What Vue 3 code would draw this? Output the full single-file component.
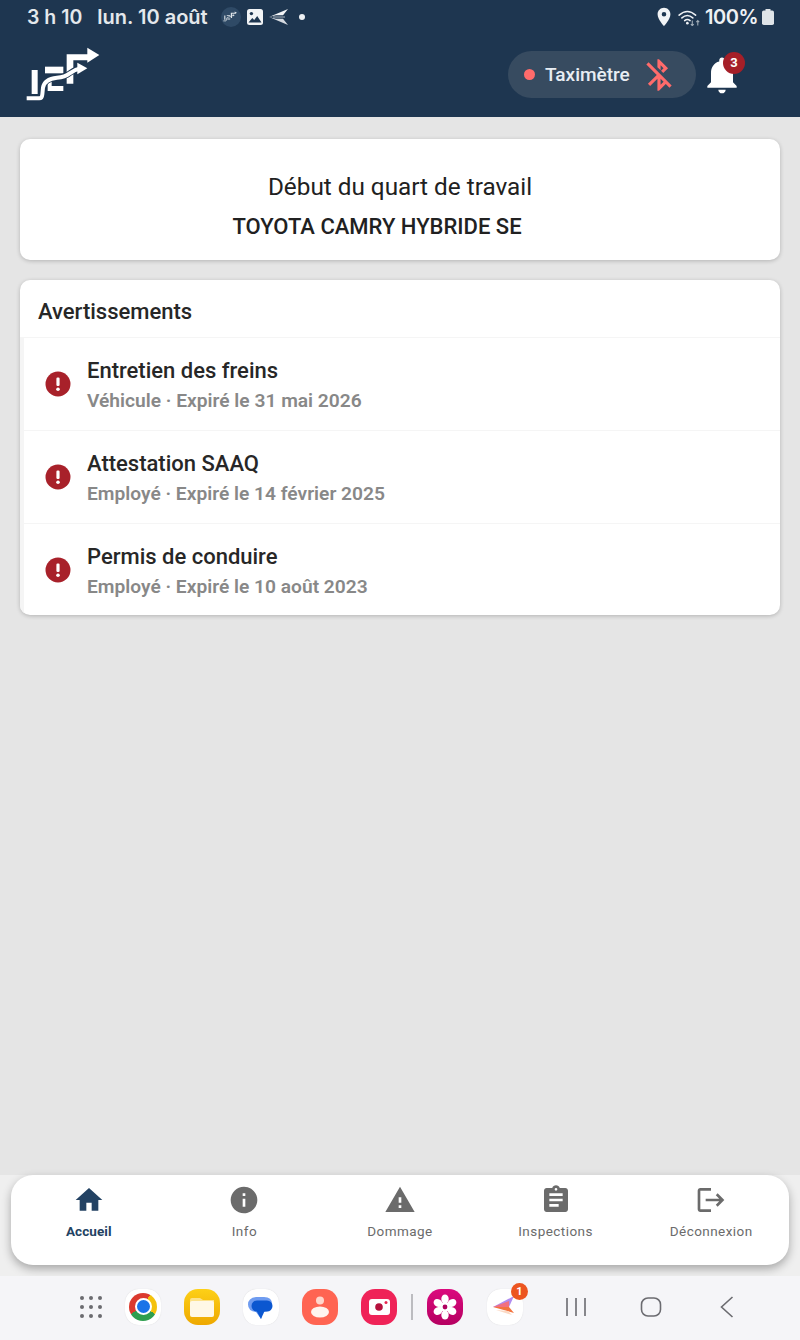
<script setup>
const warnings = [
  { title: 'Entretien des freins', sub: 'Véhicule · Expiré le 31 mai 2026' },
  { title: 'Attestation SAAQ', sub: 'Employé · Expiré le 14 février 2025' },
  { title: 'Permis de conduire', sub: 'Employé · Expiré le 10 août 2023' },
]
const tabs = [
  { label: 'Accueil', active: true, d: 'M10 20v-6h4v6h5v-8h3L12 3 2 12h3v8z' },
  { label: 'Info', d: 'M12 2C6.48 2 2 6.48 2 12s4.48 10 10 10 10-4.48 10-10S17.52 2 12 2zm1 15h-2v-6h2v6zm0-8h-2V7h2v2z' },
  { label: 'Dommage', d: 'M1 21h22L12 2 1 21zm12-3h-2v-2h2v2zm0-4h-2v-4h2v4z' },
  { label: 'Inspections', d: 'M19 3h-4.18C14.4 1.84 13.3 1 12 1c-1.3 0-2.4.84-2.82 2H5c-1.1 0-2 .9-2 2v14c0 1.1.9 2 2 2h14c1.1 0 2-.9 2-2V5c0-1.1-.9-2-2-2zm-7 0c.55 0 1 .45 1 1s-.45 1-1 1-1-.45-1-1 .45-1 1-1zm2 14H7v-2h7v2zm3-4H7v-2h10v2zm0-4H7V7h10v2z' },
  { label: 'Déconnexion', d: 'M17 7l-1.41 1.41L18.17 11H8v2h10.17l-2.58 2.58L17 17l5-5zM4 5h8V3H4c-1.1 0-2 .9-2 2v14c0 1.1.9 2 2 2h8v-2H4V5z' },
]
</script>

<template>
  <div class="screen">
    <header class="header">
      <div class="status">
        <div class="status-left">
          <span class="time">3 h 10</span>
          <span class="date">lun. 10 août</span>
          <span class="mini-logo">
            <svg viewBox="0 0 240 174" width="15" height="11">
              <path d="M20 72h18v68H20zM60 65h55v15H60zM68 120h47v15H68zM125 25h65v17h-45v70h-20z" fill="#dfe5ea"/>
              <path d="M187 5l36 22-36 23zM157 50l30 17-30 18z" fill="#dfe5ea"/>
              <path d="M5 157h40q7 0 8-12l2-20q4-28 40-32 25-2 40-14 14-11 32-12" fill="none" stroke="#dfe5ea" stroke-width="12"/>
            </svg>
          </span>
          <svg class="s-image" viewBox="0 0 16 16" width="16" height="16">
            <rect width="16" height="16" rx="2.5" fill="#f2f4f6"/>
            <circle cx="4.4" cy="4.6" r="1.7" fill="#1e3650"/>
            <path d="M1.5 13.500l3.800-4.600 1.900 2 3-3.900 4.300 6.500z" fill="#1e3650"/>
          </svg>
          <svg class="s-send" viewBox="0 0 20 16" width="20" height="16">
            <path d="M0 8L19 0l-5 6.200H7z" fill="#f2f4f6"/>
            <path d="M0 8l19 8-5-6.200H7z" fill="#d5dae0"/>
            <path d="M4 8h12" stroke="#aab4be" stroke-width="1"/>
          </svg>
          <span class="s-dot"></span>
        </div>
        <div class="status-right">
          <svg viewBox="0 0 24 24" width="22" height="22" class="s-pin">
            <path fill="#f2f4f6" d="M12 2C8.130 2 5 5.130 5 9c0 5.250 7 13 7 13s7-7.750 7-13c0-3.870-3.130-7-7-7zm0 9.500a2.500 2.500 0 0 1 0-5 2.500 2.500 0 0 1 0 5z"/>
          </svg>
          <svg viewBox="0 0 20 16.400" width="22" height="18" class="s-wifi">
            <g fill="none" stroke="#eef1f4" stroke-width="1.4" stroke-linecap="round">
              <path d="M1 6.500Q8.500 0 16 6.500"/>
              <path d="M3.500 9Q8.500 4.600 13.500 9"/>
              <path d="M6 11.500Q8.500 9.400 11 11.500"/>
            </g>
            <circle cx="8.500" cy="13.800" r="1.200" fill="#eef1f4"/>
            <path d="M13 11.500v4.500M11.700 14.700l1.300 1.400 1.300-1.400" fill="none" stroke="#9fabb6" stroke-width="1"/>
            <path d="M18 16v-4.500M16.700 12.800l1.300-1.300 1.300 1.300" fill="none" stroke="#9fabb6" stroke-width="1"/>
          </svg>
          <span class="pct">100%</span>
          <svg viewBox="0 0 12 16" width="12" height="16" class="s-batt">
            <rect x="3.500" y="0" width="5" height="2" fill="#dfe4e8"/>
            <rect x="0" y="1.500" width="12" height="14.500" rx="1.800" fill="#dfe4e8"/>
          </svg>
        </div>
      </div>
      <div class="appbar">
        <svg class="logo" viewBox="0 0 240 174" width="80" height="58" aria-label="JEF">
          <path d="M20 72h18v72H20z" fill="#fff"/>
          <path d="M60 62h55v20H60z" fill="#fff"/>
          <path d="M68 100h12v20h35v15H68z" fill="#fff"/>
          <path d="M125 25h65v18h-45v70h-20z" fill="#fff"/>
          <path d="M187 5l36 22-36 23z" fill="#fff"/>
          <path d="M5 157h38q8 0 9-12l2-20q4-26 42-30 24-2 38-13 14-11 34-15" fill="none" stroke="#1e3650" stroke-width="17"/>
          <path d="M5 157h38q8 0 9-12l2-20q4-26 42-30 24-2 38-13 14-11 34-15" fill="none" stroke="#fff" stroke-width="12"/>
          <path d="M157 50l30 17-30 18z" fill="#fff"/>
        </svg>
        <div class="appbar-right">
          <div class="pill">
            <span class="pill-dot"></span>
            <span class="pill-text">Taximètre</span>
            <svg class="bt" viewBox="0 0 24 24" width="38" height="38">
              <path fill="#ff6b6b" d="M13 5.830l1.880 1.880-1.600 1.600 1.410 1.410 3.020-3.020L12 2h-1v5.030l2 2v-3.200zM5.410 4L4 5.410 10.590 12 5 17.590 6.410 19 11 14.410V22h1l4.290-4.290 2.300 2.290L20 18.590 5.410 4zM13 18.170v-3.760l1.880 1.880L13 18.170z"/>
            </svg>
          </div>
          <div class="bell">
            <svg viewBox="0 0 24 24" width="44" height="44">
              <path fill="#fff" d="M12 22c1.100 0 2-.9 2-2h-4c0 1.100.9 2 2 2zm6-6v-5c0-3.070-1.630-5.640-4.500-6.320V4c0-.83-.67-1.500-1.500-1.500s-1.500.67-1.500 1.500v.68C7.640 5.360 6 7.920 6 11v5l-2 2v1h16v-1l-2-2z"/>
            </svg>
            <span class="badge">3</span>
          </div>
        </div>
      </div>
    </header>

    <main class="main">
      <section class="card shift">
        <div class="shift-title">Début du quart de travail</div>
        <div class="shift-vehicle">TOYOTA CAMRY HYBRIDE SE</div>
      </section>

      <section class="card warnings">
        <div class="warn-head">Avertissements</div>
        <div class="warn-list">
          <div v-for="w in warnings" :key="w.title" class="warn-row">
            <svg class="warn-icon" viewBox="0 0 26 26" width="26" height="26">
              <circle cx="13" cy="13" r="12.500" fill="#a8212a"/>
              <rect x="11.400" y="6.500" width="3.200" height="8.500" rx="1.200" fill="#fff"/>
              <circle cx="13" cy="18.200" r="1.800" fill="#fff"/>
            </svg>
            <div class="warn-text">
              <div class="warn-title">{{ w.title }}</div>
              <div class="warn-sub">{{ w.sub }}</div>
            </div>
          </div>
        </div>
      </section>
    </main>

    <div class="tab-wrap">
      <nav class="tabs">
        <div v-for="t in tabs" :key="t.label" class="tab" :class="{ active: t.active }">
          <svg viewBox="0 0 24 24" width="32" height="32"><path :d="t.d" fill="currentColor"/></svg>
          <span class="tab-label">{{ t.label }}</span>
        </div>
      </nav>
    </div>

    <footer class="dock">
      <svg class="apps" viewBox="0 0 24 24" width="24" height="24">
        <g fill="#6b6b70">
          <circle cx="3" cy="3" r="2"/><circle cx="12" cy="3" r="2"/><circle cx="21" cy="3" r="2"/>
          <circle cx="3" cy="12" r="2"/><circle cx="12" cy="12" r="2"/><circle cx="21" cy="12" r="2"/>
          <circle cx="3" cy="21" r="2"/><circle cx="12" cy="21" r="2"/><circle cx="21" cy="21" r="2"/>
        </g>
      </svg>

      <div class="dock-icons">
        <span class="app white">
          <span class="chrome"><span class="chrome-in"></span></span>
        </span>
        <span class="app files">
          <svg viewBox="0 0 36 36" width="36" height="36">
            <path d="M6 11q0-2 2-2h8l3 2h11v6H6z" fill="#fde28a"/>
            <rect x="6" y="12" width="24" height="16" rx="2" fill="#fff8e6"/>
          </svg>
        </span>
        <span class="app white">
          <svg viewBox="0 0 36 36" width="36" height="36">
            <path d="M13 8h8q8 0 8 7t-8 8h-1l-2 7-5-7q-8-1-8-7.500T13 8z" fill="#6f9cf0"/>
            <rect x="8.500" y="11.500" width="21" height="11" rx="5.500" fill="#0b57d0"/>
            <path d="M13 21h9l-4 9z" fill="#0b57d0"/>
          </svg>
        </span>
        <span class="app contacts">
          <svg viewBox="0 0 36 36" width="36" height="36">
            <circle cx="18" cy="11.500" r="4" fill="#ffd6cc"/>
            <ellipse cx="18" cy="23" rx="9" ry="5.500" fill="#fff3ee"/>
          </svg>
        </span>
        <span class="app camera">
          <svg viewBox="0 0 36 36" width="36" height="36">
            <rect x="8" y="10" width="21" height="16" rx="3" fill="#fff"/>
            <circle cx="18" cy="18" r="3.800" fill="#b5103c"/>
            <circle cx="25" cy="13.500" r="1.500" fill="#e8254f"/>
          </svg>
        </span>
        <span class="divider"></span>
        <span class="app blossom">
          <svg viewBox="0 0 36 36" width="36" height="36">
            <g fill="#fff">
              <ellipse cx="18" cy="10" rx="3.700" ry="4.600"/>
              <ellipse cx="18" cy="26" rx="3.700" ry="4.600"/>
              <ellipse cx="11" cy="14" rx="3.700" ry="4.600" transform="rotate(-60 11 14)"/>
              <ellipse cx="25" cy="14" rx="3.700" ry="4.600" transform="rotate(60 25 14)"/>
              <ellipse cx="11" cy="22" rx="3.700" ry="4.600" transform="rotate(60 11 22)"/>
              <ellipse cx="25" cy="22" rx="3.700" ry="4.600" transform="rotate(-60 25 22)"/>
              <circle cx="18" cy="18" r="5"/>
            </g>
            <circle cx="18" cy="18" r="2.400" fill="#b0005f"/>
          </svg>
        </span>
        <span class="app white direct">
          <svg viewBox="0 0 36 36" width="36" height="36">
            <path d="M6 18L27 7l-5 11z" fill="#b08cf0"/>
            <path d="M6 18l16 0 5 6z" fill="#f3733e"/>
            <path d="M6 18l16-6 0 6z" fill="#f2707f"/>
            <path d="M9 21l16 5-4-4z" fill="#fbd9c4"/>
          </svg>
          <span class="direct-badge">1</span>
        </span>
      </div>

      <div class="sys">
        <svg viewBox="0 0 20 20" width="20" height="20">
          <path d="M1 1v18M10 1v18M19 1v18" stroke="#6b6b70" stroke-width="1.600" fill="none"/>
        </svg>
        <svg viewBox="0 0 22 22" width="22" height="22">
          <rect x="1.500" y="2" width="19" height="18" rx="6.500" stroke="#6b6b70" stroke-width="1.600" fill="none"/>
        </svg>
        <svg class="sys-back" viewBox="0 0 14 22" width="14" height="22">
          <path d="M12.500 1L1.500 11l11 10" stroke="#6b6b70" stroke-width="1.600" fill="none"/>
        </svg>
      </div>
    </footer>
  </div>
</template>

<style scoped>
.screen {
  width: 800px;
  height: 1340px;
  display: flex;
  flex-direction: column;
  background: #e5e5e5;
  font-family: Roboto, "Liberation Sans", sans-serif;
  overflow: hidden;
}
.header {
  height: 117px;
  background: #1e3650;
  color: #eef1f4;
  flex: none;
}
.status {
  height: 33px;
  padding: 0 26px 0 27px;
  display: flex;
  align-items: center;
  justify-content: space-between;
  font-family: Inter, "Liberation Sans", sans-serif;
}
.status-left,
.status-right { display: flex; align-items: center; }
.time, .date { font-size: 19.500px; font-weight: 600; color: #e4e8ec; }
.date { margin-left: 15px; font-size: 20px; }
.mini-logo {
  width: 20px;
  height: 20px;
  border-radius: 50%;
  background: #2f4a66;
  display: flex;
  align-items: center;
  justify-content: center;
  margin-left: 13px;
}
.s-image { margin-left: 6px; }
.s-send { margin-left: 6px; }
.s-dot {
  width: 6px;
  height: 6px;
  border-radius: 50%;
  background: #eef1f4;
  margin-left: 10px;
}
.s-wifi { margin-left: 3px; }
.pct { font-size: 20px; font-weight: 600; letter-spacing: -0.5px; margin-left: 5px; color: #eef1f4; }
.s-batt { margin-left: 4px; }
.appbar {
  height: 84px;
  display: flex;
  align-items: flex-start;
  justify-content: space-between;
  padding-right: 56px;
}
.logo { margin-left: 25px; margin-top: 13px; }
.appbar-right { display: flex; align-items: center; margin-top: 18px; }
.pill {
  width: 188px;
  height: 47px;
  border-radius: 24px;
  background: #374b60;
  display: flex;
  align-items: center;
  padding-left: 16px;
  box-sizing: border-box;
}
.pill-dot {
  width: 11px;
  height: 11px;
  border-radius: 50%;
  background: #ff6b6b;
}
.pill-text {
  margin-left: 10px;
  font-size: 19px;
  font-weight: 500;
  color: #e8edf3;
}
.bt { margin-left: 10px; }
.bell {
  position: relative;
  width: 44px;
  height: 44px;
  margin-left: 4px;
}
.badge {
  position: absolute;
  left: 23px;
  top: -1px;
  width: 22px;
  height: 22px;
  border-radius: 50%;
  background: #a51f28;
  color: #fff;
  font-size: 13px;
  font-weight: 700;
  display: flex;
  align-items: center;
  justify-content: center;
}
.main {
  flex: 1;
  padding: 22px 20px 0;
  display: flex;
  flex-direction: column;
  gap: 20px;
}
.card {
  background: #fff;
  border-radius: 10px;
  box-shadow: 0 1px 4px rgba(0, 0, 0, 0.22);
}
.shift {
  height: 121px;
  display: flex;
  flex-direction: column;
  align-items: center;
  padding-top: 33px;
  box-sizing: border-box;
  color: #212121;
}
.shift-title { font-size: 24.300px; line-height: 30px; }
.shift-vehicle { font-size: 22px; line-height: 28px; font-weight: 500; margin-top: 11px; margin-right: 46px; }
.warnings { height: 335px; overflow: hidden; }
.warn-head {
  height: 57px;
  padding: 18px 0 0 18px;
  box-sizing: border-box;
  font-size: 22px;
  line-height: 28px;
  font-weight: 500;
  color: #272727;
}
.warn-list { border-left: 4px solid #f5f5f5; }
.warn-row {
  height: 93px;
  box-sizing: border-box;
  border-top: 1px solid #f5f5f5;
  display: flex;
  align-items: center;
  padding-left: 21px;
}
.warn-text { margin-left: 16px; padding-top: 2px; }
.warn-title { font-size: 22px; line-height: 28px; font-weight: 500; color: #272727; }
.warn-sub { font-size: 19.200px; line-height: 24px; margin-top: 4px; font-weight: 600; color: #888; }
.tab-wrap {
  flex: none;
  height: 101px;
  padding: 0 11px;
  box-sizing: border-box;
  background: #efefef;
}
.tabs {
  height: 90px;
  background: #fff;
  border-radius: 22px;
  box-shadow: 0 4px 10px rgba(0, 0, 0, 0.3);
  display: grid;
  grid-template-columns: repeat(5, 1fr);
}
.tab {
  display: flex;
  flex-direction: column;
  align-items: center;
  padding-top: 9px;
  color: #6b6b6b;
}
.tab.active { color: #234263; }
.tab-label {
  margin-top: 6px;
  font-size: 13.500px;
  line-height: 18px;
  font-weight: 400;
  letter-spacing: 0.45px;
}
.tab.active .tab-label { font-weight: 700; letter-spacing: 0.1px; }
.dock {
  flex: none;
  height: 64px;
  background: #f5f5f8;
  display: flex;
  align-items: center;
  padding-left: 79px;
  padding-bottom: 3px;
  box-sizing: border-box;
}
.dock-icons { display: flex; align-items: center; gap: 23px; margin-left: 22px; }
.app {
  position: relative;
  width: 36px;
  height: 36px;
  border-radius: 14px;
  display: block;
  flex: none;
}
.white { background: #fff; box-shadow: 0 0 1px rgba(0, 0, 0, 0.15); }
.chrome {
  position: absolute;
  left: 4px;
  top: 4px;
  width: 28px;
  height: 28px;
  border-radius: 50%;
  background: conic-gradient(from 30deg, #f4c20d 0 90deg, #2e9e4f 90deg 210deg, #db3a2e 210deg 360deg);
  display: flex;
  align-items: center;
  justify-content: center;
}
.chrome-in {
  width: 13px;
  height: 13px;
  border-radius: 50%;
  background: #1a73e8;
  border: 2.500px solid #fff;
}
.files { background: linear-gradient(#fdd017, #eea800); }
.contacts { background: #ff6452; }
.camera { background: #ef2358; }
.divider {
  width: 2px;
  height: 26px;
  background: #bcbcc0;
  margin: 0 -9px 0 -9px;
}
.blossom { background: linear-gradient(#db0a7e, #b50061); }
.direct { margin-left: 1px; }
.direct-badge {
  position: absolute;
  right: -5px;
  top: -6px;
  width: 17px;
  height: 17px;
  border-radius: 50%;
  background: #ec5520;
  color: #fff;
  font-size: 11px;
  font-weight: 700;
  display: flex;
  align-items: center;
  justify-content: center;
}
.sys { display: flex; align-items: center; margin-left: 43px; gap: 54px; }
.sys-back { margin-left: 4px; }
</style>
